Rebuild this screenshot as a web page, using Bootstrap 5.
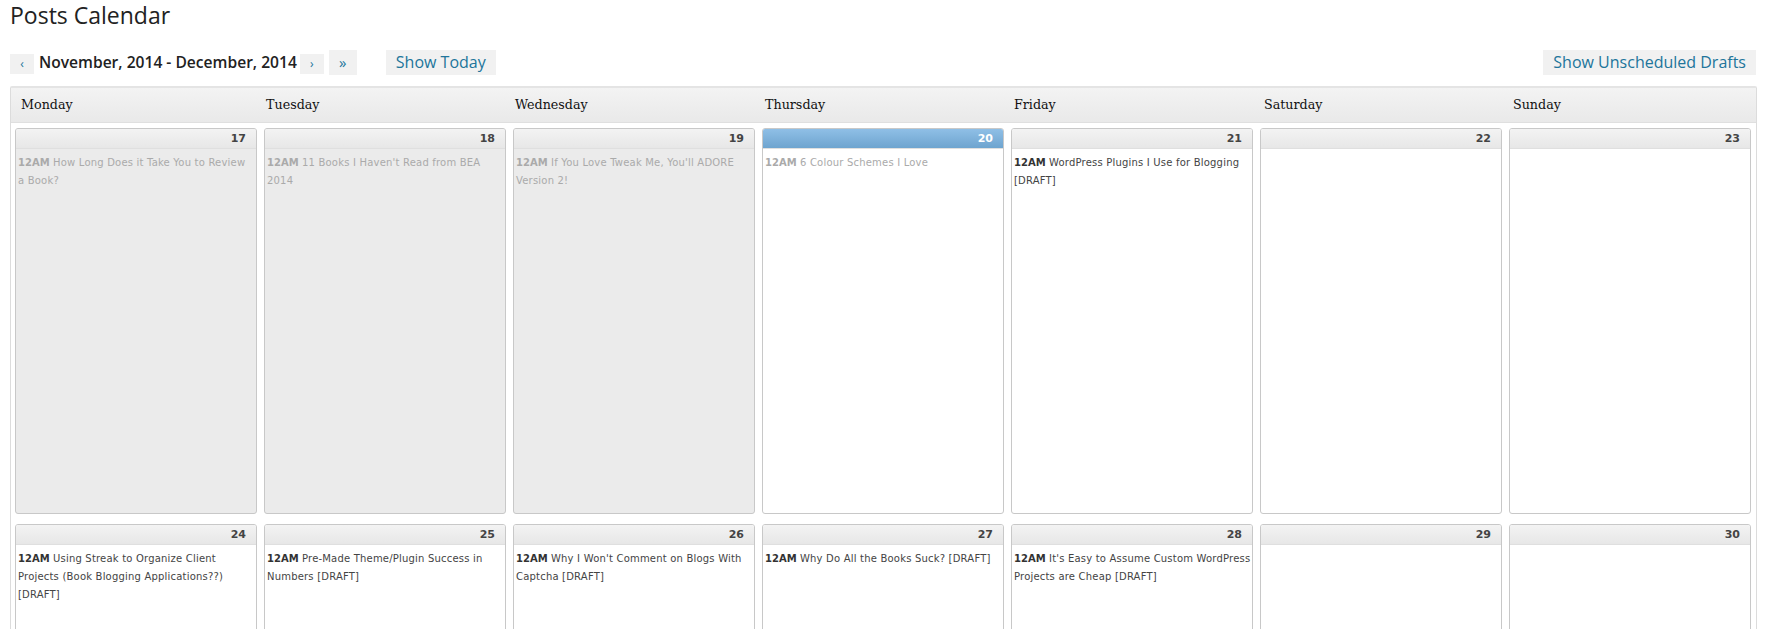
<!DOCTYPE html>
<html lang="en">
<head>
<meta charset="utf-8">
<title>Posts Calendar</title>
<link href="https://cdn.jsdelivr.net/npm/bootstrap@5.3.0/dist/css/bootstrap.min.css" rel="stylesheet">
<style>
html,body{height:629px;overflow:hidden;background:#fff}
body{font-family:"Open Sans","Noto Sans",sans-serif;color:#222;padding:0 11px 0 10px}
.page-title{font-size:23px;font-weight:400;line-height:30px;margin:0;height:50px;color:#222}
.toolbar{height:25px;margin:0 1px 11px 0}
.pager-btn{display:block;background:#f1f1f1;color:#21759b;text-decoration:none;font-size:13px;text-align:center}
.pager-sm{width:24px;height:20px;line-height:20px;margin-top:4px;font-size:12px}
.pager-lg{width:28px;height:25px;line-height:25px;margin-left:5px;font-size:15px}
.range-text{font-size:15.6px;font-weight:600;line-height:25px;margin:0 3px 0 5px;color:#222}
.show-btn{display:block;background:#f1f1f1;color:#21759b;text-decoration:none;font-size:16px;line-height:25px;height:25px;padding:0 10px}
.today-btn{margin-left:29px}
.board{border:1px solid #dcdcdc;border-top:2px solid #e4e4e4;border-bottom:0;border-radius:2px 2px 0 0;height:600px}
.week-head{display:grid;grid-template-columns:245px 249px 250px 249px 250px 249px 240px;height:35px;background:linear-gradient(#f3f3f3,#e9e9e9);border-bottom:1px solid #dfdfdf;padding-left:10px}
.week-head span{font-family:"DejaVu Serif","Liberation Serif",serif;font-size:12.7px;line-height:34px;color:#111}
.week-row{display:grid;grid-template-columns:repeat(7,242px);column-gap:7px;padding:5px 0 0 4px;margin-bottom:5px}
.day-box{height:386px;border:1px solid #c8c8c8;border-radius:3px;background:#fff;overflow:hidden}
.day-past{background:#ebebeb}
.day-num{height:20px;background:linear-gradient(#f3f3f3,#e7e7e7);border-bottom:1px solid #dfdfdf;text-align:right;padding-right:10px;font:700 11px/20px "DejaVu Sans",sans-serif;color:#444}
.day-today .day-num{background:linear-gradient(#8fbfe6,#6ea4cf);border-bottom-color:#dfdfdf;color:#fff}
.post-item{font:400 10px/18px "DejaVu Sans",sans-serif;letter-spacing:.2px;color:#444;padding:5px 0 0 2px}
.post-item b{font-weight:700;color:#333;letter-spacing:0}
.post-faded,.post-faded b{color:#aaa}
</style>
</head>
<body>
<h1 class="page-title">Posts Calendar</h1>
<div class="toolbar d-flex align-items-start">
  <a class="pager-btn pager-sm" href="#">‹</a>
  <span class="range-text">November, 2014 - December, 2014</span>
  <a class="pager-btn pager-sm" href="#">›</a>
  <a class="pager-btn pager-lg" href="#">»</a>
  <a class="show-btn today-btn" href="#">Show Today</a>
  <a class="show-btn ms-auto" href="#">Show Unscheduled Drafts</a>
</div>
<div class="board">
  <div class="week-head"><span>Monday</span><span>Tuesday</span><span>Wednesday</span><span>Thursday</span><span>Friday</span><span>Saturday</span><span>Sunday</span></div>
  <div class="week-row">
    <div class="day-box day-past"><div class="day-num">17</div><div class="post-item post-faded"><b>12AM</b> How Long Does it Take You to Review a&nbsp;Book?</div></div>
    <div class="day-box day-past"><div class="day-num">18</div><div class="post-item post-faded"><b>12AM</b> 11 Books I Haven't Read from BEA 2014</div></div>
    <div class="day-box day-past"><div class="day-num">19</div><div class="post-item post-faded"><b>12AM</b> If You Love Tweak Me, You'll ADORE Version 2!</div></div>
    <div class="day-box day-today"><div class="day-num">20</div><div class="post-item post-faded"><b>12AM</b> 6 Colour Schemes I Love</div></div>
    <div class="day-box"><div class="day-num">21</div><div class="post-item"><b>12AM</b> WordPress Plugins I Use for Blogging [DRAFT]</div></div>
    <div class="day-box"><div class="day-num">22</div></div>
    <div class="day-box"><div class="day-num">23</div></div>
  </div>
  <div class="week-row">
    <div class="day-box"><div class="day-num">24</div><div class="post-item"><b>12AM</b> Using Streak to Organize Client Projects (Book Blogging Applications??) [DRAFT]</div></div>
    <div class="day-box"><div class="day-num">25</div><div class="post-item"><b>12AM</b> Pre-Made Theme/Plugin Success in Numbers [DRAFT]</div></div>
    <div class="day-box"><div class="day-num">26</div><div class="post-item"><b>12AM</b> Why I Won't Comment on Blogs With Captcha [DRAFT]</div></div>
    <div class="day-box"><div class="day-num">27</div><div class="post-item"><b>12AM</b> Why Do All the Books Suck? [DRAFT]</div></div>
    <div class="day-box"><div class="day-num">28</div><div class="post-item"><b>12AM</b> It's Easy to Assume Custom WordPress Projects are Cheap [DRAFT]</div></div>
    <div class="day-box"><div class="day-num">29</div></div>
    <div class="day-box"><div class="day-num">30</div></div>
  </div>
</div>
<script src="https://cdn.jsdelivr.net/npm/bootstrap@5.3.0/dist/js/bootstrap.bundle.min.js"></script>
</body>
</html>
